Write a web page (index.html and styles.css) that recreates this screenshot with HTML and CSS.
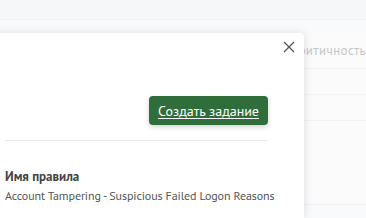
FILE: index.html
```html
<!DOCTYPE html>
<html lang="ru">
<head>
<meta charset="utf-8">
<link rel="stylesheet" href="styles.css">
</head>
<body>
<div class="page">
  <div class="topbar"></div>
  <div class="content">
    <div class="table">
      <div class="thead"><span class="th">Критичность</span></div>
      <div class="trow"></div>
      <div class="trow tall"></div>
    </div>
  </div>
</div>
<div class="modal">
  <button class="close" aria-label="Закрыть">
    <svg width="12" height="12" viewBox="0 0 12 12"><path d="M1 1L11 11M11 1L1 11" stroke="#555" stroke-width="1.3" fill="none"/></svg>
  </button>
  <div class="actions">
    <a class="btn" href="#">Создать задание</a>
  </div>
  <div class="divider"></div>
  <div class="field">
    <div class="label">Имя правила</div>
    <div class="value">Account Tampering - Suspicious Failed Logon Reasons</div>
  </div>
</div>
</body>
</html>
```
FILE: styles.css
```css
html, body {
  margin: 0;
  padding: 0;
  width: 366px;
  height: 218px;
  overflow: hidden;
  background: #f9fafb;
  font-family: "PT Sans", "Noto Sans", "Open Sans", sans-serif;
}
.page {
  display: flex;
  flex-direction: column;
  height: 218px;
  overflow: hidden;
}
.topbar {
  height: 19px;
  flex: none;
  background: #f6f7f9;
  border-bottom: 1px solid #eef0f3;
}
.content {
  flex: 1;
  padding: 0 0 0 20px;
  overflow: hidden;
}
.table {
  margin-top: 13px;
  background: #fbfbfc;
  height: 172px;
  box-sizing: border-box;
  border-bottom: 1px solid #f0f1f3;
}
.thead {
  height: 35px;
  display: flex;
  align-items: center;
  justify-content: flex-end;
  border-bottom: 1px solid #eef0f2;
  padding-right: 0;
}
.th {
  font-size: 13px;
  letter-spacing: 0.4px;
  color: #c3c7cc;
  white-space: nowrap;
}
.trow {
  height: 25px;
  border-bottom: 1px solid #f2f3f5;
}
.modal {
  position: absolute;
  left: -20px;
  top: 33px;
  width: 324px;
  height: 185px;
  background: #fff;
  border-radius: 0 4px 0 0;
  box-shadow: 1px 0 8px rgba(30, 40, 60, 0.12);
  box-sizing: border-box;
  padding: 63px 36px 0 25px;
}
.close {
  position: absolute;
  top: 8px;
  right: 9px;
  width: 12px;
  height: 12px;
  padding: 0;
  border: 0;
  background: none;
  display: flex;
}
.actions {
  display: flex;
  justify-content: flex-end;
}
.btn {
  display: inline-flex;
  align-items: center;
  justify-content: center;
  width: 119px;
  height: 29px;
  background: #2f6e3b;
  color: #fff;
  border-radius: 4px;
  font-size: 14px;
  text-decoration: underline;
  text-underline-offset: 2px;
  box-shadow: 0 2px 5px rgba(0, 0, 0, 0.18);
}
.divider {
  height: 1px;
  background: #e6e8eb;
  margin-top: 15px;
}
.field {
  padding-top: 27px;
  white-space: nowrap;
}
.label {
  font-size: 13px;
  font-weight: 700;
  color: #444;
  line-height: 18px;
}
.value {
  font-size: 12px;
  letter-spacing: -0.1px;
  color: #555;
  line-height: 20px;
}
```
